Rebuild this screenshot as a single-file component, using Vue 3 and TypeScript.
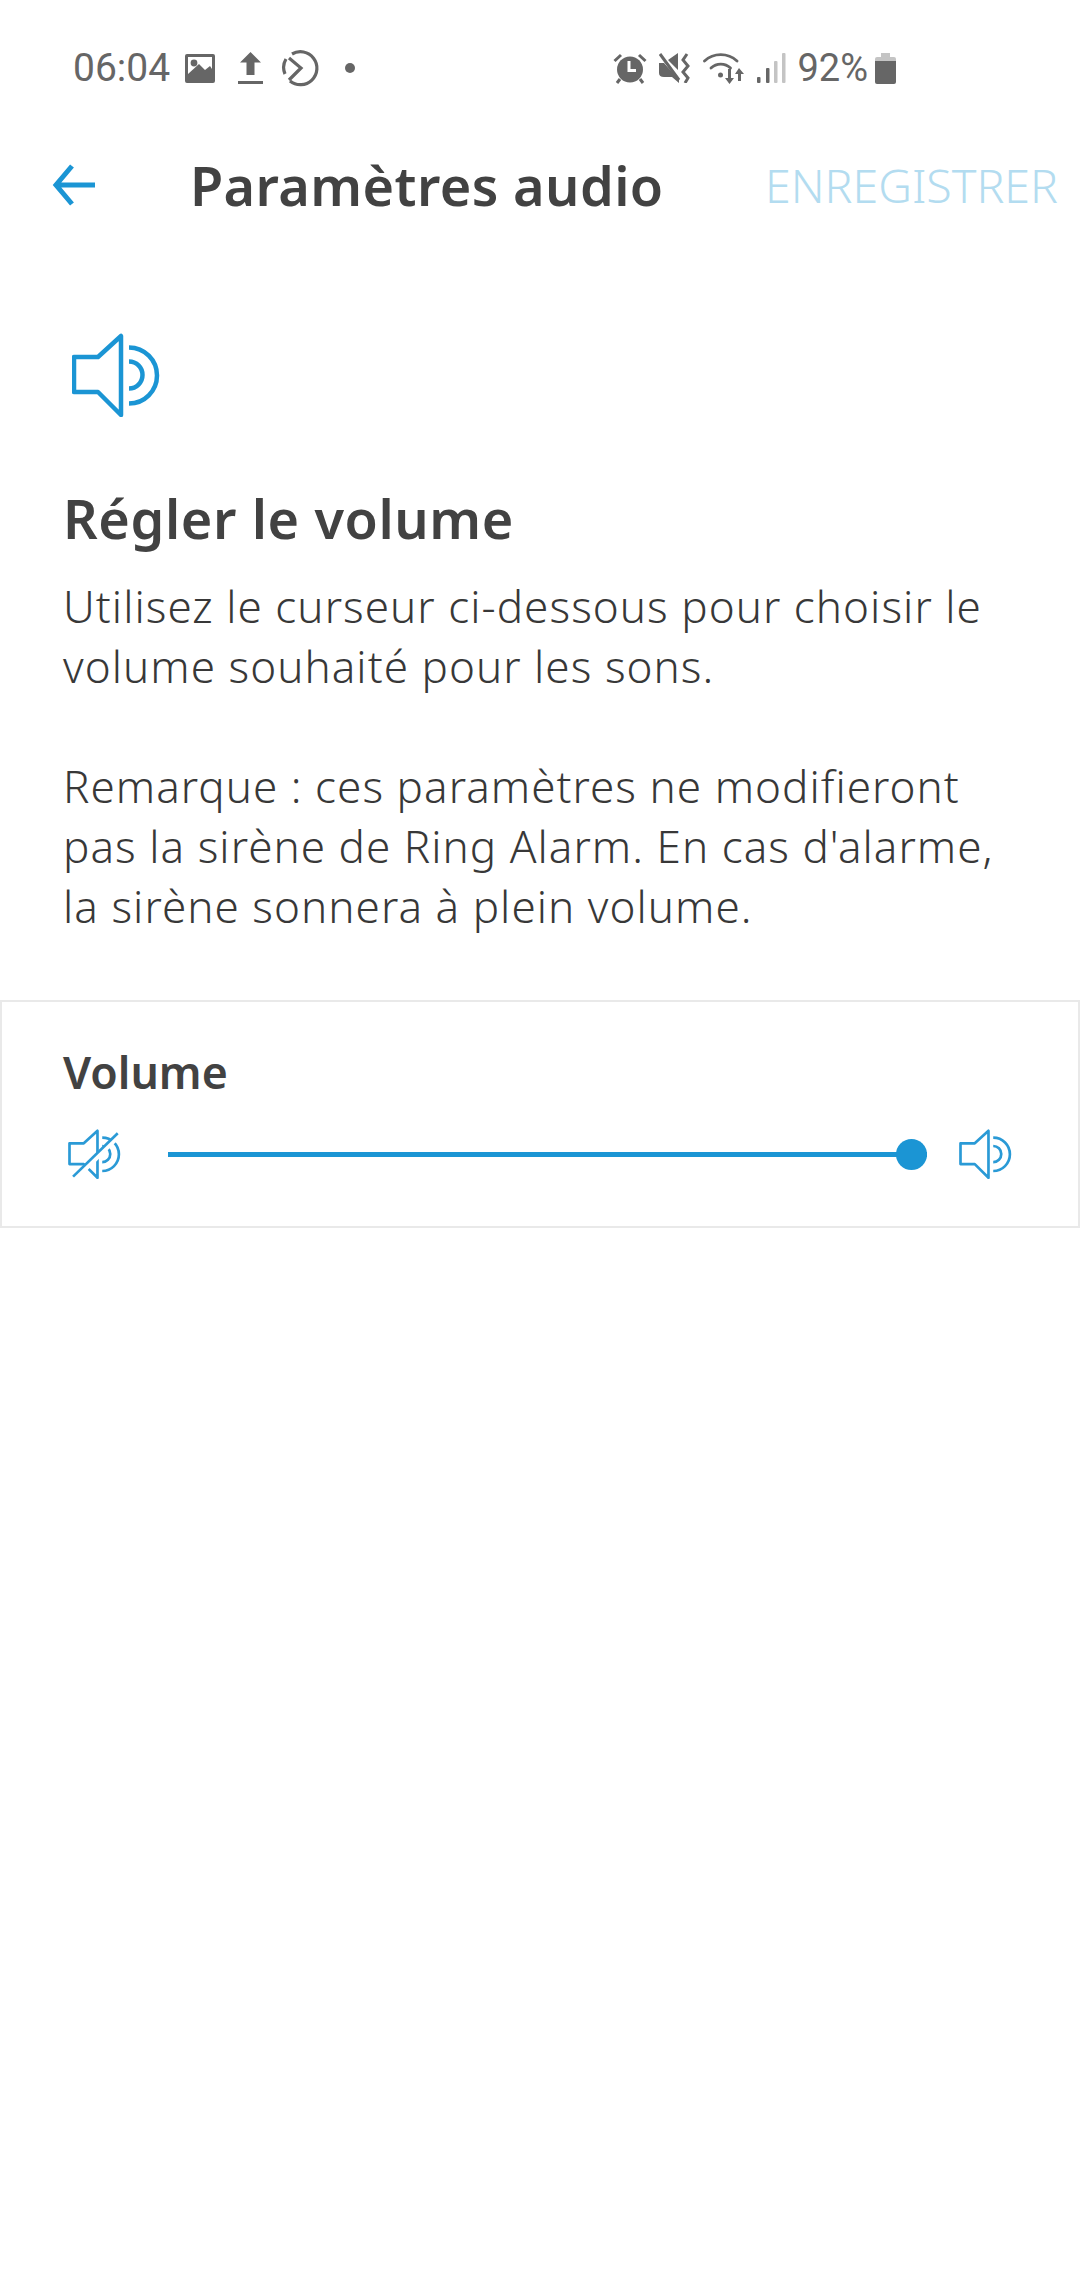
<script setup lang="ts">
const speaker = 'M2 24H26L49 3V82L26 59H2Z'
const waves = 'M57 14.5A28 28 0 0 1 57 70.5M57 28.5A13.5 13.5 0 0 1 57 55.5'
</script>

<template>
  <div class="screen">
    <div class="status-bar">
      <div class="status-left">
        <span class="time">06:04</span>
        <svg class="st-image" width="30" height="29" viewBox="0 0 30 29">
          <path fill="#666" fill-rule="evenodd" d="M2 0H28A2 2 0 0 1 30 2V27A2 2 0 0 1 28 29H2A2 2 0 0 1 0 27V2A2 2 0 0 1 2 0ZM3 3V20L14 10L20 16L25 12L27 15V3Z" />
          <circle cx="9" cy="9" r="3.4" fill="#666" />
        </svg>
        <svg class="st-upload" width="25" height="32" viewBox="0 0 25 32">
          <path fill="#666" d="M12.5 0L23 10.500H16.500V23H8.500V10.500H2ZM0 29H25V32H0Z" />
        </svg>
        <svg class="st-sync" width="38" height="38" viewBox="0 0 38 38">
          <g fill="none" stroke="#666" stroke-width="3.200">
            <path d="M11 5A16.500 16.500 0 1 1 9 32" />
            <path d="M5 10A16.500 16.500 0 0 0 4 25" />
            <path d="M8 9L20 19L8 31" />
          </g>
        </svg>
        <span class="st-dot"></span>
      </div>
      <div class="status-right">
        <svg width="34" height="32" viewBox="0 0 34 32">
          <path fill="none" stroke="#666" stroke-width="3" d="M1.500 9L8 3M32.500 9L26 3M7 27L4 31M27 27L30 31" />
          <circle cx="17" cy="17.500" r="13" fill="#666" />
          <path fill="none" stroke="#fff" stroke-width="3" d="M16 9V18.500H23" />
        </svg>
        <svg width="32" height="30" viewBox="0 0 32 30">
          <path fill="#666" d="M0 10H5L20 27V30L13 24H5Q0 24 0 20ZM9 7L19 0V17Z" />
          <path fill="none" stroke="#666" stroke-width="3" d="M1 1L20 27M28 1L24 7L29 13L24 19L29 25L26 30" />
        </svg>
        <svg width="42" height="32" viewBox="0 0 42 32">
          <g fill="none" stroke="#666" stroke-width="2.800" stroke-linecap="round">
            <path d="M1.500 9A24 24 0 0 1 34 9" />
            <path d="M8 16A14 14 0 0 1 27.500 16" />
          </g>
          <circle cx="17.500" cy="23" r="2.500" fill="#666" />
          <path fill="#666" d="M25 17H28V26H31L26.500 32L22 26H25ZM36 16L41 22H38V29H35V22H32Z" />
        </svg>
        <svg width="29" height="30" viewBox="0 0 29 30">
          <rect x="0" y="24" width="3.500" height="6" rx="1" fill="#666" />
          <rect x="9" y="15" width="3.500" height="15" rx="1" fill="#666" />
          <rect x="17" y="8" width="3.500" height="22" rx="1" fill="#c4c4c4" />
          <rect x="25" y="0" width="3.500" height="30" rx="1" fill="#c4c4c4" />
        </svg>
        <span class="battery-text">92%</span>
        <svg width="21" height="31" viewBox="0 0 21 31">
          <path fill="#c4c4c4" d="M6 0H15V4H19A2 2 0 0 1 21 6V9H0V6A2 2 0 0 1 2 4H6Z" />
          <path fill="#666" d="M0 8H21V29A2 2 0 0 1 19 31H2A2 2 0 0 1 0 29Z" />
        </svg>
      </div>
    </div>

    <header class="top-bar">
      <svg class="back" width="43" height="42" viewBox="0 0 43 42">
        <path fill="none" stroke="#1b95d4" stroke-width="5" d="M43 21H4M20 2L4 21L20 40" />
      </svg>
      <h1 class="title">Paramètres audio</h1>
      <span class="save">ENREGISTRER</span>
    </header>

    <section class="intro">
      <svg class="big-speaker" width="88" height="84" viewBox="0 0 88 84">
        <g fill="none" stroke="#1b95d4" stroke-width="4.500" stroke-linejoin="round">
          <path :d="speaker" />
          <path :d="waves" />
        </g>
      </svg>
      <h2 class="heading">Régler le volume</h2>
      <p class="copy">Utilisez le curseur ci-dessous pour choisir le volume souhaité pour les sons.</p>
      <p class="copy note">Remarque : ces paramètres ne modifieront pas la sirène de Ring Alarm. En cas d'alarme, la sirène sonnera à plein volume.</p>
    </section>

    <section class="volume">
      <div class="volume-label">Volume</div>
      <div class="slider-row">
        <svg class="small-icon" width="53" height="50" viewBox="0 0 88 84">
          <g fill="none" stroke="#2a9ad6" stroke-width="4.500" stroke-linejoin="round">
            <path :d="speaker" />
            <path :d="waves" />
            <path stroke="#fff" stroke-width="10" d="M14 80L83 12" />
            <path d="M8 80L83 7" />
          </g>
        </svg>
        <div class="track"><span class="knob"></span></div>
        <svg class="small-icon" width="53" height="50" viewBox="0 0 88 84">
          <g fill="none" stroke="#2a9ad6" stroke-width="4.500" stroke-linejoin="round">
            <path :d="speaker" />
            <path :d="waves" />
          </g>
        </svg>
      </div>
    </section>
  </div>
</template>

<style scoped>
.screen {
  width: 1080px;
  height: 2280px;
  background: #fff;
  font-family: "Noto Sans", "Open Sans", sans-serif;
  color: #424242;
  overflow: hidden;
}

.status-bar {
  height: 136px;
  box-sizing: border-box;
  padding: 0 184px 0 73px;
  display: flex;
  justify-content: space-between;
  align-items: center;
  color: #666;
}

.status-left,
.status-right {
  display: flex;
  align-items: center;
}

.status-right {
  gap: 12px;
}

.time {
  font-family: Roboto, sans-serif;
  font-size: 39px;
  margin-right: 15px;
}

.st-upload {
  margin-left: 23px;
}

.st-sync {
  margin-left: 18px;
}

.st-dot {
  width: 10px;
  height: 10px;
  border-radius: 50%;
  background: #666;
  margin-left: 26px;
}

.battery-text {
  font-family: Roboto, sans-serif;
  font-size: 38px;
  margin: 0 -5px 0 -1px;
}

.top-bar {
  height: 98px;
  display: flex;
  align-items: center;
  padding-left: 52px;
}

.title {
  margin: 0 0 0 95px;
  font-size: 54px;
  font-weight: 600;
  letter-spacing: 0.4px;
  width: 575px;
  flex: none;
  white-space: nowrap;
}

.save {
  font-size: 46.5px;
  font-weight: 300;
  color: #b3dcf0;
  white-space: nowrap;
}

.intro {
  padding: 99px 63px 0;
}

.big-speaker {
  display: block;
  margin-left: 9px;
}

.heading {
  margin: 66px 0 0;
  font-size: 54px;
  line-height: 70px;
  font-weight: 600;
  letter-spacing: 0.6px;
}

.copy {
  margin: 0;
  font-size: 44px;
  line-height: 60px;
  font-weight: 300;
  letter-spacing: 1.05px;
  color: #383838;
}

.heading + .copy {
  margin-top: 23px;
}

.note {
  margin-top: 60px;
}

.volume {
  margin-top: 64px;
  height: 228px;
  box-sizing: border-box;
  border: 2px solid #e9e9e9;
  padding: 41px 66px 0 61px;
}

.volume-label {
  font-size: 44.6px;
  line-height: 58px;
  font-weight: 600;
}

.slider-row {
  display: flex;
  align-items: center;
  margin-top: 28px;
  padding-left: 5px;
}

.small-icon {
  flex: none;
}

.track {
  position: relative;
  flex: 1;
  height: 5px;
  margin: 0 32px 0 47px;
  background: #1b95d4;
}

.knob {
  position: absolute;
  right: 0;
  top: -13px;
  width: 31px;
  height: 31px;
  border-radius: 50%;
  background: #1b95d4;
}
</style>
